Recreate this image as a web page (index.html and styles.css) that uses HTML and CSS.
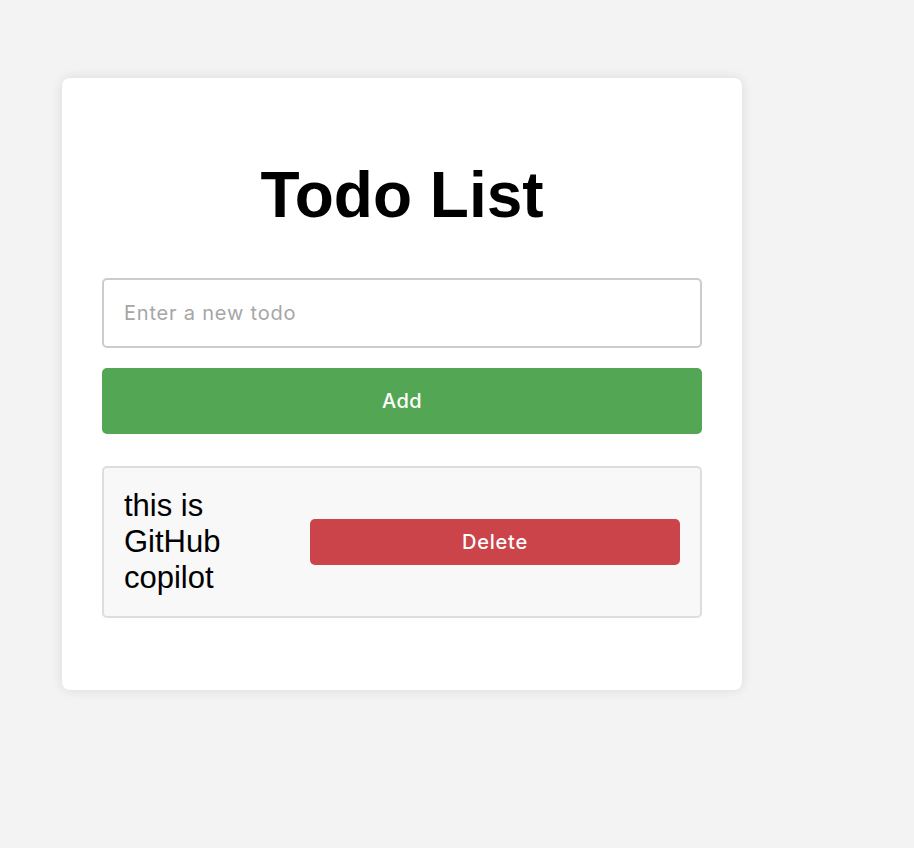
FILE: index.html
```html
<!DOCTYPE html>
<html lang="en">
<head>
<meta charset="utf-8">
<title>Todo List</title>
<link rel="stylesheet" href="styles.css">
</head>
<body>
  <div class="card">
    <h1 class="title">Todo List</h1>
    <input class="todo-input" type="text" placeholder="Enter a new todo">
    <button class="add-btn" type="button">Add</button>
    <ul class="todo-list">
      <li class="todo-item">
        <span class="todo-text">this is GitHub copilot</span>
        <button class="delete-btn" type="button">Delete</button>
      </li>
    </ul>
  </div>
</body>
</html>
```

FILE: styles.css
```css
html, body {
  margin: 0;
  padding: 0;
}

body {
  background: #f3f3f3;
  font-family: "Liberation Sans", Arial, sans-serif;
  padding: 78px 0 0 62px;
  min-height: 848px;
  box-sizing: border-box;
}

.card {
  width: 680px;
  box-sizing: border-box;
  background: #ffffff;
  border-radius: 8px;
  box-shadow: 0 0 12px rgba(0, 0, 0, 0.1);
  padding: 40px 40px 72px;
  display: flex;
  flex-direction: column;
}

.title {
  font-family: "Liberation Sans", Arial, sans-serif;
  font-weight: bold;
  font-size: 64px;
  line-height: 72px;
  text-align: center;
  margin: 41px 0 47px;
  color: #000;
}

.todo-input {
  box-sizing: border-box;
  height: 70px;
  width: 100%;
  border: 2px solid #cccccc;
  border-radius: 5px;
  padding: 0 20px;
  font-family: Inter, "Open Sans", sans-serif;
  font-size: 20px;
  letter-spacing: 0.8px;
  color: #000;
  outline: none;
  margin: 0;
}

.todo-input::placeholder {
  color: #a6a6a6;
}

.add-btn {
  margin-top: 20px;
  height: 66px;
  width: 100%;
  border: none;
  border-radius: 5px;
  background: #53a653;
  color: #ffffff;
  font-family: Inter, "Open Sans", sans-serif;
  font-size: 20px;
  font-weight: 500;
  letter-spacing: 0.4px;
  cursor: pointer;
}

.todo-list {
  list-style: none;
  margin: 32px 0 0;
  padding: 0;
}

.todo-item {
  display: flex;
  align-items: center;
  gap: 20px;
  background: #f8f8f8;
  border: 2px solid #dddddd;
  border-radius: 5px;
  padding: 20px;
}

.todo-text {
  flex: 1;
  font-family: "Liberation Sans", Arial, sans-serif;
  font-size: 31px;
  line-height: 36px;
  color: #000;
}

.delete-btn {
  flex: 0 0 370px;
  height: 46px;
  border: none;
  border-radius: 5px;
  background: #cb444a;
  color: #ffffff;
  font-family: Inter, "Open Sans", sans-serif;
  font-size: 20px;
  font-weight: 500;
  letter-spacing: 0.8px;
  cursor: pointer;
}
```
